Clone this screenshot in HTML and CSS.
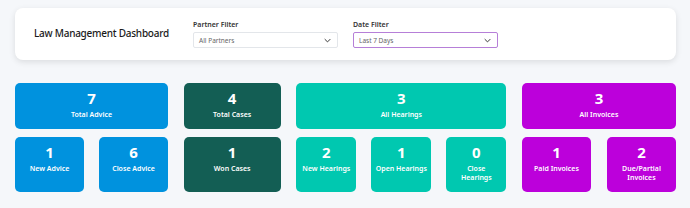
FILE: index.html
```html
<!DOCTYPE html>
<html>
<head>
<meta charset="utf-8">
<link rel="stylesheet" href="styles.css">
</head>
<body>
<div class="page">
  <header class="header">
    <h1 class="title">Law Management Dashboard</h1>
    <div class="filter">
      <label class="filter-label">Partner Filter</label>
      <div class="select">
        <span>All Partners</span>
        <svg class="chev" viewBox="0 0 10 6" width="7" height="5"><path d="M1 1 L5 5 L9 1" fill="none" stroke="#333" stroke-width="1.4"/></svg>
      </div>
    </div>
    <div class="filter">
      <label class="filter-label">Date Filter</label>
      <div class="select active">
        <span>Last 7 Days</span>
        <svg class="chev" viewBox="0 0 10 6" width="7" height="5"><path d="M1 1 L5 5 L9 1" fill="none" stroke="#333" stroke-width="1.4"/></svg>
      </div>
    </div>
  </header>

  <section class="grid">
    <div class="card blue"><div class="num">7</div><div class="lbl">Total Advice</div></div>
    <div class="card dark"><div class="num">4</div><div class="lbl">Total Cases</div></div>
    <div class="card teal"><div class="num">3</div><div class="lbl">All Hearings</div></div>
    <div class="card purple"><div class="num">3</div><div class="lbl">All Invoices</div></div>

    <div class="sub">
      <div class="card blue"><div class="num">1</div><div class="lbl">New Advice</div></div>
      <div class="card blue"><div class="num">6</div><div class="lbl">Close Advice</div></div>
    </div>
    <div class="sub">
      <div class="card dark"><div class="num">1</div><div class="lbl">Won Cases</div></div>
    </div>
    <div class="sub">
      <div class="card teal"><div class="num">2</div><div class="lbl">New Hearings</div></div>
      <div class="card teal"><div class="num">1</div><div class="lbl">Open Hearings</div></div>
      <div class="card teal"><div class="num">0</div><div class="lbl">Close<br>Hearings</div></div>
    </div>
    <div class="sub wide">
      <div class="card purple"><div class="num">1</div><div class="lbl">Paid Invoices</div></div>
      <div class="card purple"><div class="num">2</div><div class="lbl">Due/Partial<br>Invoices</div></div>
    </div>
  </section>
</div>
</body>
</html>
```

FILE: styles.css
```css
* { box-sizing: border-box; }
html, body { margin: 0; padding: 0; }
body {
  background: #f5f7fa;
  font-family: "Noto Sans", "DejaVu Sans", sans-serif;
  color: #222;
  width: 690px;
  height: 208px;
  overflow: hidden;
}
.page {
  padding: 8px 14px 0 15px;
}
.header {
  background: #fff;
  border-radius: 8px;
  box-shadow: 0 2px 6px rgba(0,0,0,0.11);
  height: 52px;
  display: flex;
  align-items: center;
  padding: 0 19px;
}
.title {
  margin: 0;
  width: 159px;
  font-size: 10px;
  letter-spacing: -0.25px;
  font-weight: 500;
  color: #1a1a1a;
  margin-top: -3px;
}
.filter {
  width: 145px;
  margin-right: 15px;
  display: flex;
  flex-direction: column;
}
.filter-label {
  font-size: 7px;
  font-weight: 600;
  color: #333;
  line-height: 9px;
  margin-bottom: 3px;
}
.select {
  height: 16px;
  border: 1px solid #e3e6ea;
  border-radius: 2px;
  display: flex;
  align-items: center;
  justify-content: space-between;
  padding: 0 6px 0 5px;
  font-size: 6.5px;
  color: #666;
}
.select.active {
  border-color: #b67fd8;
}
.chev { display: block; }

.grid {
  margin-top: 23px;
  display: grid;
  grid-template-columns: 153px 97px 210px 1fr;
  column-gap: 15.67px;
  row-gap: 8px;
}
.sub {
  display: flex;
  gap: 15px;
}
.sub.wide { gap: 16px; }
.sub .card { flex: 1; }
.card {
  border-radius: 5px;
  color: #fff;
  text-align: center;
  padding: 6px 4px 10px;
  display: flex;
  flex-direction: column;
  align-items: center;
}
.num {
  font-size: 15px;
  font-weight: 700;
  line-height: 18px;
}
.lbl {
  margin-top: 3px;
  font-size: 7px;
  font-weight: 600;
  line-height: 9px;
}
.blue { background: #0092de; }
.dark { background: #135e54; }
.teal { background: #00c8b0; }
.purple { background: #bc00db; }
```
